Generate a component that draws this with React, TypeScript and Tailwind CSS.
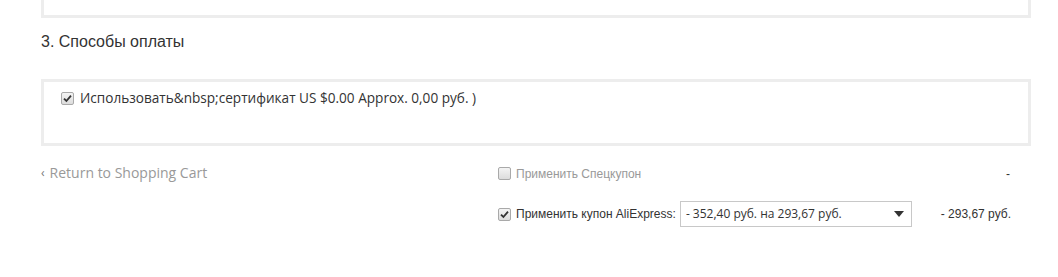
const Check = ({ checked }: { checked: boolean }) => (
  <span className="flex h-[13px] w-[13px] shrink-0 items-center justify-center rounded-[2px] border border-[#a9a9a9] bg-gradient-to-b from-[#f4f4f4] to-[#dcdcdc]">
    {checked && (
      <svg width="9" height="9" viewBox="0 0 9 9">
        <path d="M1 4.6 L3.4 7 L8 1.6" fill="none" stroke="#333" strokeWidth="1.8" />
      </svg>
    )}
  </span>
);

const App = () => {
  return (
    <div className="h-[277px] w-[1058px] overflow-hidden bg-white">
      <div className="ml-[41px] w-[990px]">
        <div className="h-[18px] border-x-[3px] border-b-[3px] border-[#ededed]" />
        <h2 className="mt-[14px] font-['Liberation_Sans',Arial,sans-serif] text-[16px] leading-[20px] text-[#333]">
          3. Способы оплаты
        </h2>
        <div className="mt-[27px] h-[67px] border-[3px] border-[#ededed] pl-[17px] pt-[7px]">
          <label className="flex items-center gap-[6px] font-['Open_Sans',sans-serif] text-[13.6px] leading-[18px] text-[#333]">
            <Check checked />
            <span>Использовать&amp;nbsp;сертификат US $0.00 Approx. 0,00 руб. )</span>
          </label>
        </div>
        <div className="mt-[15px] flex items-start">
          <a className="flex w-[457px] items-center gap-[5px] pt-[2px] font-['Open_Sans',sans-serif] text-[14px] leading-[20px] text-[#999]">
            <span className="text-[12px] text-[#777]">‹</span>
            <span>Return to Shopping Cart</span>
          </a>
          <div className="flex w-[513px] flex-col gap-[15px] font-['Liberation_Sans',Arial,sans-serif] text-[12px] text-[#333]">
            <div className="flex h-[25px] items-center justify-between">
              <label className="flex items-center gap-[5px] text-[#999]">
                <Check checked={false} />
                <span>Применить Спецкупон</span>
              </label>
              <span className="pr-[1px]">-</span>
            </div>
            <div className="flex h-[26px] items-center justify-between">
              <div className="flex items-center">
                <label className="flex items-center gap-[5px]">
                  <Check checked />
                  <span>Применить купон AliExpress:</span>
                </label>
                <div className="ml-[4px] flex h-[26px] w-[232px] items-center justify-between border border-[#c8c8c8] pl-[5px] pr-[7px] font-['Open_Sans',sans-serif] text-[12px] text-[#333]">
                  <span>- 352,40 руб. на 293,67 руб.</span>
                  <svg width="10" height="6" viewBox="0 0 10 6">
                    <path d="M0 0 H10 L5 6 Z" fill="#333" />
                  </svg>
                </div>
              </div>
              <span>- 293,67 руб.</span>
            </div>
          </div>
        </div>
      </div>
    </div>
  );
};

export default App;
